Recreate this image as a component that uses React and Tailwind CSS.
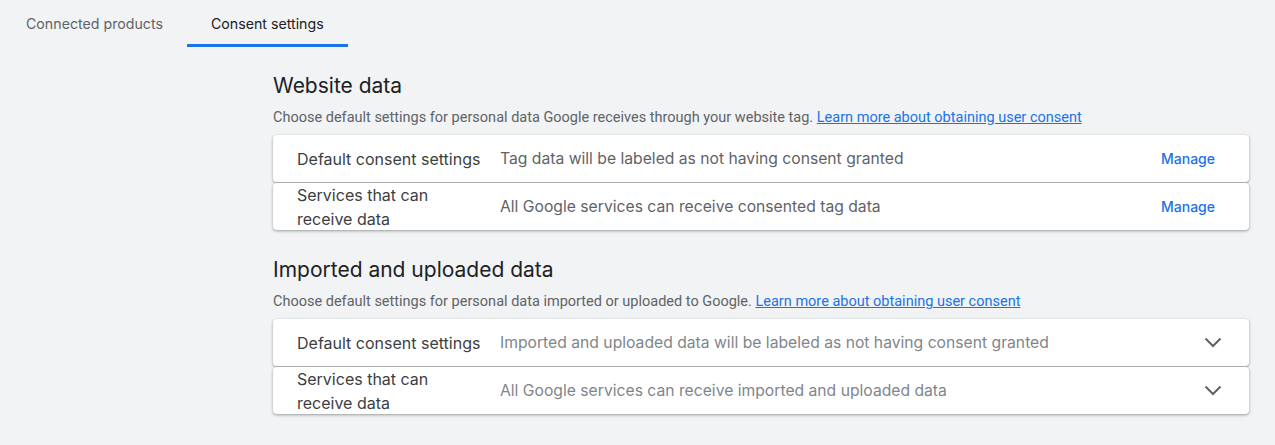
const sans = '[font-family:Inter,"Open_Sans",sans-serif]';

function Chevron() {
  return (
    <svg width="18" height="11" viewBox="0 0 18 11" fill="none" className="text-[#5f6368]">
      <path d="M1.5 1.5 9 9l7.5-7.5" stroke="currentColor" strokeWidth="2" />
    </svg>
  );
}

function Row({ label, value, action, muted }) {
  return (
    <div className="flex items-center h-[47px] bg-white rounded-[4px] shadow-[0_1px_2px_rgba(60,64,67,0.3),0_1px_3px_1px_rgba(60,64,67,0.15)] pl-6 pr-[27px]">
      <div className={`w-[188px] mr-[15px] shrink-0 text-[16px] leading-6 text-[#3c4043] ${sans}`}>{label}</div>
      <div className={`flex-1 text-[15.7px] ${sans} ${muted ? 'text-[#80868b]' : 'text-[#5f6368]'}`}>{value}</div>
      {action === 'manage' ? (
        <button className={`text-[14px] font-medium text-[#1a73e8] mr-[7px] ${sans}`}>Manage</button>
      ) : (
        <Chevron />
      )}
    </div>
  );
}

function Section({ title, desc, rows, muted, action }) {
  return (
    <section>
      <h2 className={`text-[21px] leading-7 text-[#202124] ${sans}`}>{title}</h2>
      <p className="mt-[8px] text-[14.5px] leading-5 text-[#5f6368] [font-family:Roboto,sans-serif]">
        {desc}{' '}
        <a href="#" className="text-[#1a73e8] underline">Learn more about obtaining user consent</a>
      </p>
      <div className="mt-[7px] flex flex-col gap-px">
        {rows.map(r => (
          <Row key={r.label} label={r.label} value={r.value} action={action} muted={muted} />
        ))}
      </div>
    </section>
  );
}

export default function App() {
  return (
    <div className="min-h-[445px] bg-[#f1f3f4] [font-family:Roboto,sans-serif]">
      {/* ── Tabs ── */}
      <div className="flex h-[47px] pl-[2px]">
        <div className={`px-6 pt-[13px] text-[14.2px] text-[#5f6368] ${sans}`}>Connected products</div>
        <div className={`px-6 pt-[13px] text-[14.2px] text-[#202124] border-b-[3px] border-[#1a73e8] ${sans}`}>Consent settings</div>
      </div>

      <div className="pl-[273px] pr-[26px] pt-[25px] flex flex-col gap-[26px]">
        <Section
          title="Website data"
          desc="Choose default settings for personal data Google receives through your website tag."
          action="manage"
          rows={[
            { label: 'Default consent settings', value: 'Tag data will be labeled as not having consent granted' },
            { label: 'Services that can receive data', value: 'All Google services can receive consented tag data' },
          ]}
        />
        <Section
          title="Imported and uploaded data"
          desc="Choose default settings for personal data imported or uploaded to Google."
          action="chevron"
          muted
          rows={[
            { label: 'Default consent settings', value: 'Imported and uploaded data will be labeled as not having consent granted' },
            { label: 'Services that can receive data', value: 'All Google services can receive imported and uploaded data' },
          ]}
        />
      </div>
    </div>
  );
}
